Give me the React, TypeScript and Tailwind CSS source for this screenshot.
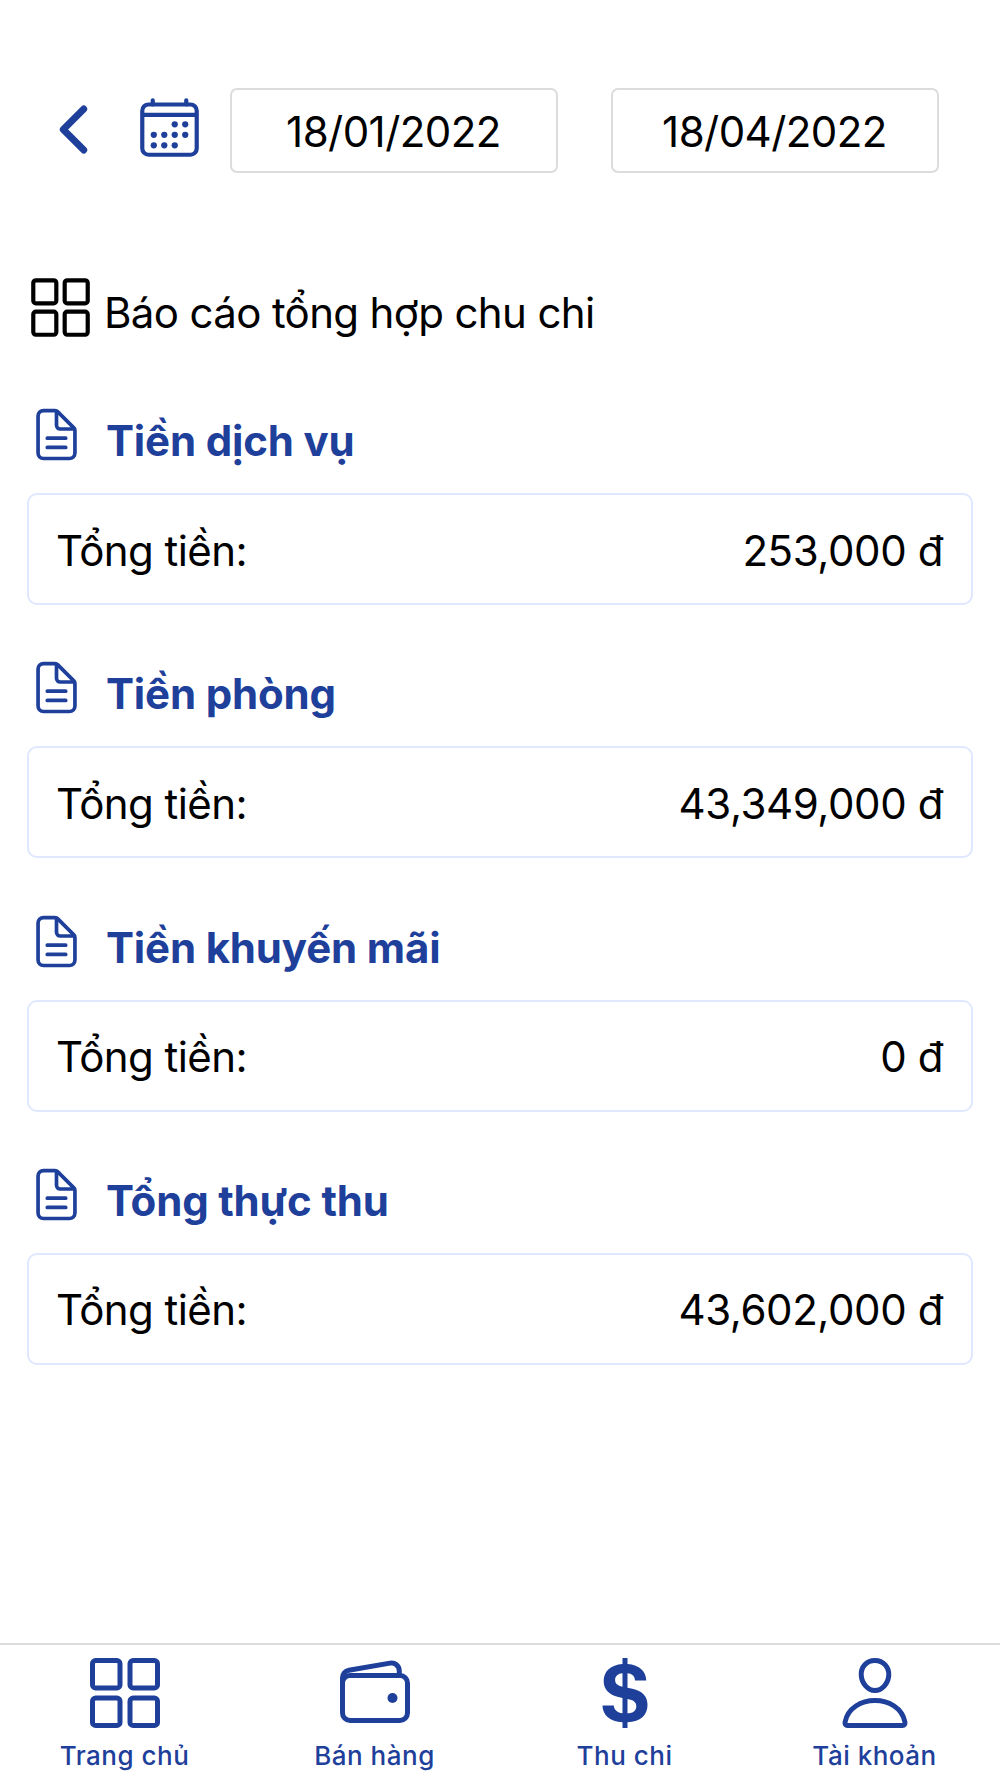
import React from 'react';
import {
  IoCalendarOutline,
  IoChevronBack,
  IoDocumentTextOutline,
  IoGridOutline,
  IoLogoUsd,
  IoPersonOutline,
  IoWalletOutline,
} from 'react-icons/io5';
import type { IconType } from 'react-icons';

interface ReportItem {
  title: string;
  total: number;
}

interface TabItem {
  label: string;
  icon: IconType;
}

const REPORT: ReportItem[] = [
  { title: 'Tiền dịch vụ', total: 253000 },
  { title: 'Tiền phòng', total: 43349000 },
  { title: 'Tiền khuyến mãi', total: 0 },
  { title: 'Tổng thực thu', total: 43602000 },
];

const TABS: TabItem[] = [
  { label: 'Trang chủ', icon: IoGridOutline },
  { label: 'Bán hàng', icon: IoWalletOutline },
  { label: 'Thu chi', icon: IoLogoUsd },
  { label: 'Tài khoản', icon: IoPersonOutline },
];

const formatMoney = (value: number) => `${value.toLocaleString('en-US')} đ`;

const DateBox: React.FC<{ value: string }> = ({ value }) => (
  <button className="flex h-[85px] w-[328px] items-center justify-center rounded-[7px] border-2 border-[#dcdcdc] pt-0.5 text-[42px] leading-none tracking-[-0.55px]">
    {value}
  </button>
);

const ReportSection: React.FC<{ item: ReportItem }> = ({ item }) => (
  <section className="h-[253.3px]">
    <div className="flex h-[88px] items-start">
      <IoDocumentTextOutline size={59} className="-ml-[0.4px] shrink-0 text-[#1e409b]" />
      <h2 className="ml-[20.4px] pt-2 text-[42px] leading-[56px] font-bold tracking-[-0.17px] whitespace-nowrap text-[#1e409b]">{item.title}</h2>
    </div>
    <div className="flex h-28 items-center justify-between rounded-[10px] border-2 border-[#e0e8ff] px-7 pt-0.5 text-[42px]">
      <span className="-ml-px tracking-[-0.58px]">Tổng tiền:</span>
      <span className="tracking-[-0.4px]">{formatMoney(item.total)}</span>
    </div>
  </section>
);

export default function App() {
  return (
    <div className="flex h-[1778px] w-[1000px] flex-col overflow-hidden bg-white font-['Inter',sans-serif] text-black">
      {/* Date range */}
      <header className="flex h-[173px] items-end pl-[37px]">
        <IoChevronBack size={73} className="mb-[7px] shrink-0 text-[#1e409b]" />
        <IoCalendarOutline size={67} className="mb-[12.5px] ml-[26px] shrink-0 text-[#1e409b]" />
        <div className="ml-[26.5px] flex gap-[53px]">
          <DateBox value="18/01/2022" />
          <DateBox value="18/04/2022" />
        </div>
      </header>

      <main className="flex-1 px-[27px] pt-[101px]">
        <div className="flex h-[131px] items-start">
          <IoGridOutline size={67} className="-ml-[0.5px] shrink-0" />
          <h1 className="ml-[10.5px] pt-[11px] text-[42px] leading-[56px] tracking-[-0.64px] whitespace-nowrap">Báo cáo tổng hợp chu chi</h1>
        </div>
        {REPORT.map((item) => (
          <ReportSection key={item.title} item={item} />
        ))}
      </main>

      {/* Bottom tabs */}
      <nav className="grid h-[135px] shrink-0 grid-cols-4 border-t-2 border-[#dcdcdc]">
        {TABS.map(({ label, icon: Icon }) => (
          <button key={label} className="flex flex-col items-center pt-[7.5px] text-[#1e409b]">
            <Icon size={80} />
            <span className="mt-[7px] -ml-px text-[26px] leading-[32px] font-medium tracking-[0.5px]">{label}</span>
          </button>
        ))}
      </nav>
    </div>
  );
}
